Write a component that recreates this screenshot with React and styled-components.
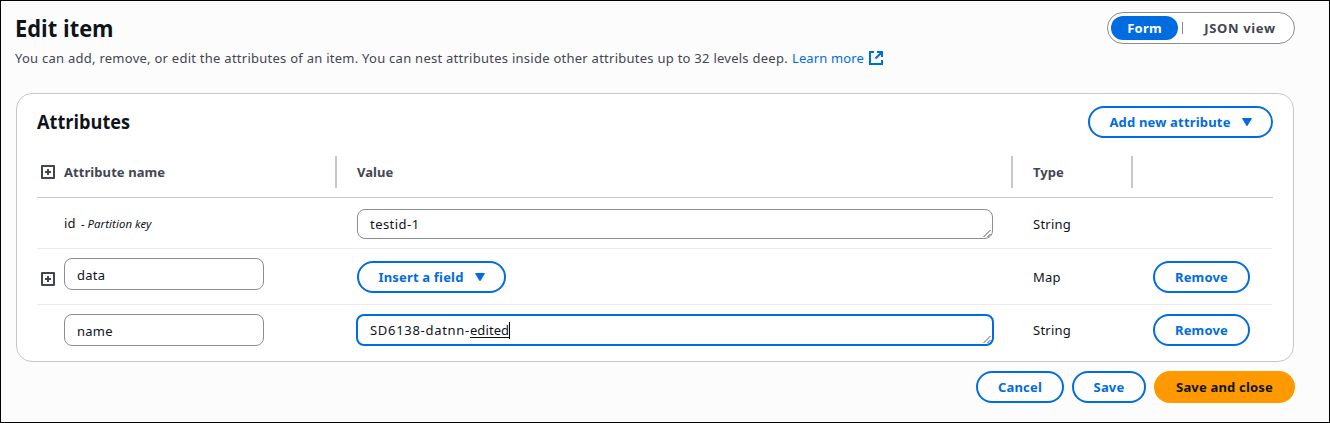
import React from 'react';
import styled, { createGlobalStyle, css } from 'styled-components';

const blue = '#006ce0';
const ink = '#0f141a';
const muted = '#424650';

const Global = createGlobalStyle`
  *, *::before, *::after { box-sizing: border-box; }
  body { margin: 0; background: #fcfcfd; }
`;

const Page = styled.main`
  width: 1330px;
  height: 423px;
  padding: 11px 34px 0 15px;
  border: 1px solid #000;
  background: #fcfcfd;
  color: ${ink};
  font: 13px/20px 'Noto Sans', 'Open Sans', sans-serif;
  letter-spacing: 0.256px;
  white-space: nowrap;
`;

const PageHeader = styled.header`
  display: flex;
  justify-content: space-between;
  align-items: flex-start;
  height: 81px;
`;

const Title = styled.h1`
  margin: 0 0 0 -1px;
  font: 700 23px/32px 'Open Sans', sans-serif;
  letter-spacing: 0;
  transform: scaleX(0.952);
  transform-origin: left;
`;

const Description = styled.p`
  display: flex;
  align-items: center;
  margin: 4px 0 0 -1px;
  color: ${muted};
`;

const Link = styled.a`
  display: inline-flex;
  align-items: center;
  gap: 5px;
  margin-left: 4px;
  color: ${blue};
  letter-spacing: 0.15px;
`;

const Segments = styled.div`
  display: flex;
  align-items: center;
  width: 188px;
  height: 32px;
  padding: 0 3px;
  border: 1px solid #8c8c94;
  border-radius: 16px;
  background: #fff;
`;

const Segment = styled.button`
  flex: none;
  width: ${p => p.$width}px;
  height: 24px;
  padding: 0;
  border: 0;
  border-radius: 12px;
  background: ${p => (p.$active ? blue : 'transparent')};
  color: ${p => (p.$active ? '#fff' : muted)};
  font: 700 13px/20px 'Noto Sans', sans-serif;
  letter-spacing: ${p => p.$spacing}px;
`;

const SegmentDivider = styled.span`
  flex: none;
  width: 1px;
  height: 12px;
  margin: 0 4px;
  background: #8c8c94;
`;

const Card = styled.section`
  width: 1278px;
  height: 269px;
  padding: 12px 20px 0;
  border: 1px solid #c6c6cd;
  border-radius: 16px;
  background: #fff;
`;

const CardHeader = styled.div`
  display: flex;
  justify-content: space-between;
  height: 50px;
`;

const CardTitle = styled.h2`
  margin: 0;
  font: 700 19.5px/32px 'Open Sans', sans-serif;
  letter-spacing: 0;
  transform: scaleX(0.93);
  transform-origin: left;
`;

const Button = styled.button`
  display: flex;
  align-items: center;
  justify-content: center;
  gap: 11px;
  width: ${p => p.$width}px;
  height: 32px;
  padding: 0;
  border: 2px solid ${p => (p.$primary ? '#ff9900' : blue)};
  border-radius: 16px;
  background: ${p => (p.$primary ? '#ff9900' : '#fff')};
  color: ${p => (p.$primary ? ink : blue)};
  font: 700 13px/20px 'Noto Sans', sans-serif;
  letter-spacing: 0.18px;
`;

const columns = css`
  display: grid;
  grid-template-columns: 300px 676px 120px 140px;
`;

const HeadRow = styled.div`
  ${columns}
  height: 42px;
  border-bottom: 1px solid #c6c6cd;
`;

const HeadCell = styled.div`
  display: flex;
  align-items: center;
  gap: 9px;
  height: 32px;
  padding-left: ${p => (p.$first ? 4 : 20)}px;
  border-right: ${p => (p.$last ? 0 : 2)}px solid #c6c6cd;
  color: ${muted};
  font-weight: 700;
  letter-spacing: 0.07px;
`;

const Row = styled.div`
  ${columns}
  height: ${p => p.$height}px;
  padding-top: ${p => p.$top}px;
  width: 1235px;
  border-bottom: ${p => (p.$last ? 0 : 1)}px solid #ebebf0;
`;

const NameCell = styled.div`
  display: flex;
  align-items: flex-start;
  height: 32px;
  padding-left: ${p => (p.$icon ? 4 : 27)}px;
  gap: 9px;
`;

const IconSlot = styled.span`
  display: flex;
  padding-top: 11px;
`;

const KeyName = styled.div`
  display: flex;
  align-items: baseline;
  gap: 5px;
  padding-top: 5px;
`;

const KeyKind = styled.em`
  font-size: 11.4px;
  letter-spacing: 0.07px;
`;

const Input = styled.div`
  width: 200px;
  height: 32px;
  padding: 6px 12px;
  border: 1px solid #8c8c94;
  border-radius: 8px;
  background: #fff;
`;

const RaisedInput = styled(Input)`
  margin-top: -3px;
`;

const Cell = styled.div`
  display: flex;
  align-items: center;
  height: 32px;
  padding-left: ${p => (p.$flush ? 19 : 20)}px;
`;

const Area = styled.div`
  position: relative;
  display: flex;
  align-items: center;
  width: ${p => (p.$focused ? 638 : 636)}px;
  height: ${p => (p.$focused ? 32 : 30)}px;
  padding-left: 12px;
  border: ${p => (p.$focused ? `2px solid ${blue}` : '1px solid #8c8c94')};
  border-radius: 8px;
  background: #fff;
  letter-spacing: ${p => (p.$focused ? 0.7 : 0.45)}px;
`;

const Grip = styled.svg`
  position: absolute;
  right: 0;
  bottom: 0;
`;

const Composing = styled.span`
  height: 17px;
  margin-bottom: 2px;
  line-height: 18px;
  border-bottom: 1px solid ${ink};
  letter-spacing: 0.1px;
`;

const Caret = styled.span`
  width: 1px;
  height: 17px;
  background: #000;
`;

const Footer = styled.footer`
  display: flex;
  justify-content: flex-end;
  gap: 8px;
  padding-top: 9px;
`;

const PlusIcon = () => (
  <svg width="14" height="14" viewBox="0 0 14 14" fill="none" stroke={muted} strokeWidth="2" strokeLinejoin="round">
    <path d="M1 1h12v12H1zM7 4v6M4 7h6" />
  </svg>
);

const ExternalIcon = () => (
  <svg width="14" height="14" viewBox="0 0 14 14" fill="none" stroke={blue} strokeWidth="2">
    <path d="M5 1H1v12h12V9M8 1h5v5M13 1L6.5 7.5" />
  </svg>
);

const ArrowIcon = () => (
  <svg width="10" height="8" viewBox="0 0 10 8" fill={blue}>
    <path d="M.7 0h8.6q.9 0 .5.8L5.7 7.4Q5 8.4 4.3 7.4L.2.8Q-.2 0 .7 0z" />
  </svg>
);

const ResizeGrip = () => (
  <Grip width="9" height="9" viewBox="0 0 9 9" stroke="#44464c" strokeWidth="0.9">
    <path d="M.5 8L7.5 1M4.5 8L7.5 5" />
  </Grip>
);

export default function App() {
  return (
    <Page>
      <Global />
      <PageHeader>
        <div>
          <Title>Edit item</Title>
          <Description>
            You can add, remove, or edit the attributes of an item. You can nest attributes inside other attributes up to 32 levels deep.
            <Link>Learn more <ExternalIcon /></Link>
          </Description>
        </div>
        <Segments>
          <Segment $active $width={67} $spacing={0.2}>Form</Segment>
          <SegmentDivider />
          <Segment $width={106} $spacing={0.65}>JSON view</Segment>
        </Segments>
      </PageHeader>

      <Card>
        <CardHeader>
          <CardTitle>Attributes</CardTitle>
          <Button $width={185}>Add new attribute <ArrowIcon /></Button>
        </CardHeader>
        <HeadRow>
          <HeadCell $first><PlusIcon />Attribute name</HeadCell>
          <HeadCell>Value</HeadCell>
          <HeadCell>Type</HeadCell>
          <HeadCell $last />
        </HeadRow>
        <Row $height={51} $top={10}>
          <NameCell><KeyName>id <KeyKind>- Partition key</KeyKind></KeyName></NameCell>
          <Cell><Area>testid-1<ResizeGrip /></Area></Cell>
          <Cell>String</Cell>
        </Row>
        <Row $height={56} $top={12}>
          <NameCell $icon>
            <IconSlot><PlusIcon /></IconSlot>
            <RaisedInput>data</RaisedInput>
          </NameCell>
          <Cell><Button $width={149}>Insert a field <ArrowIcon /></Button></Cell>
          <Cell>Map</Cell>
          <Cell><Button $width={97}>Remove</Button></Cell>
        </Row>
        <Row $height={56} $top={9} $last>
          <NameCell><Input>name</Input></NameCell>
          <Cell $flush><Area $focused>SD6138-datnn-<Composing>edited</Composing><Caret /><ResizeGrip /></Area></Cell>
          <Cell>String</Cell>
          <Cell><Button $width={97}>Remove</Button></Cell>
        </Row>
      </Card>

      <Footer>
        <Button $width={88}>Cancel</Button>
        <Button $width={74}>Save</Button>
        <Button $primary $width={141}>Save and close</Button>
      </Footer>
    </Page>
  );
}
